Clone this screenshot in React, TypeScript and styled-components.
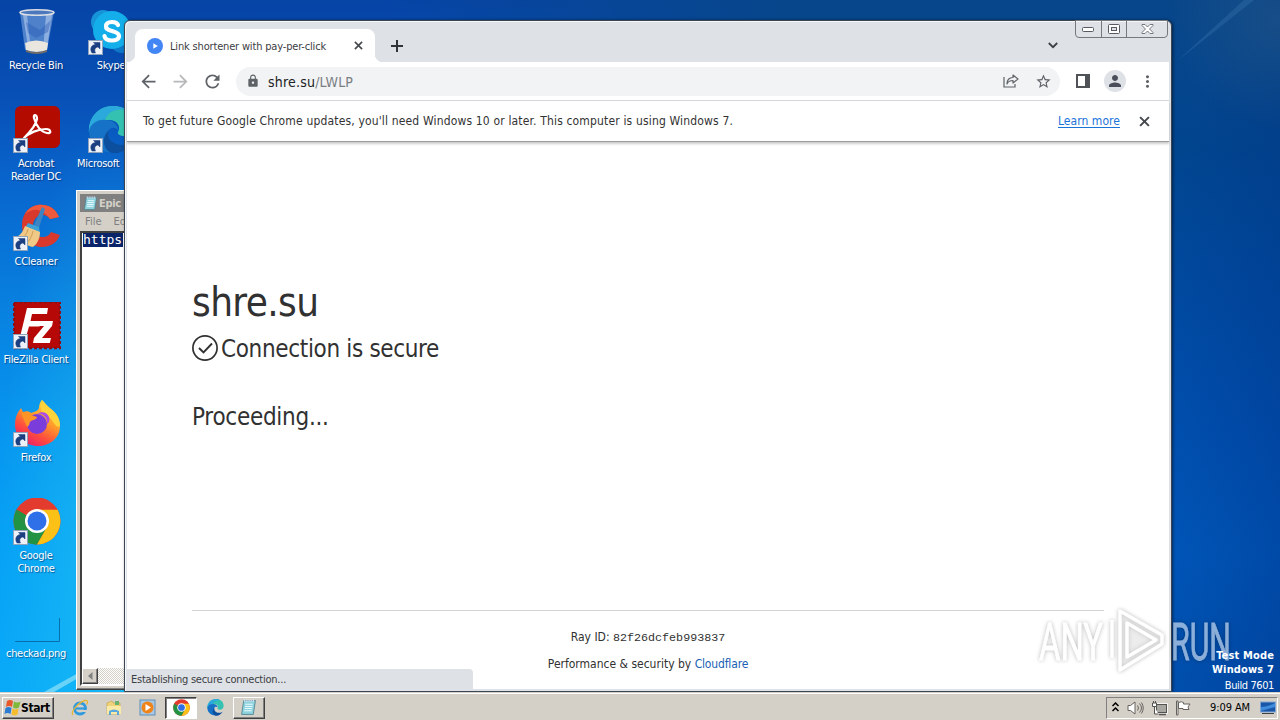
import React from 'react';
import styled, { createGlobalStyle, css } from 'styled-components';
import {
  MdArrowBack,
  MdArrowForward,
  MdLock,
  MdMoreVert,
  MdPerson,
  MdRefresh,
  MdStarBorder,
} from 'react-icons/md';

const fonts = {
  ui: '"DejaVu Sans Condensed", "DejaVu Sans", sans-serif',
  mono: '"DejaVu Sans Mono", monospace',
  courier: '"Liberation Mono", monospace',
};

const colors = {
  face: '#d4d0c8',
  frame: '#dee1e6',
  icon: '#5f6368',
  text: '#313131',
  link: '#1a5fb4',
};

const raised = css`
  border: 1px solid;
  border-color: #fff #404040 #404040 #fff;
  box-shadow: inset -1px -1px 0 #808080;
`;

const GlobalStyle = createGlobalStyle`
  * {
    box-sizing: border-box;
  }

  body {
    margin: 0;
    overflow: hidden;
    font-family: ${fonts.ui};
    font-size: 11px;
  }

  svg {
    display: block;
    flex-shrink: 0;
  }
`;

const Screen = styled.div`
  display: flex;
  flex-direction: column;
  width: 1280px;
  height: 720px;
  overflow: hidden;
`;

const Desktop = styled.main`
  position: relative;
  flex: 1;
  overflow: hidden;
  background: linear-gradient(90deg, transparent 30%, #07468a 62%),
    radial-gradient(
      ellipse 110px 420px at 110px 540px,
      rgba(50, 215, 240, 0.4),
      transparent
    ),
    linear-gradient(
      #0644a6 0%,
      #0850b6 14%,
      #0868d0 28%,
      #0880e0 44%,
      #0794ee 60%,
      #06a0f5 76%,
      #0aaaf8 100%
    );
`;

const RightGlow = styled.div`
  position: absolute;
  inset: 0 0 0 1160px;
  background: radial-gradient(
      circle at 120px 20px,
      rgba(40, 90, 135, 0.5),
      transparent 110px
    ),
    linear-gradient(100deg, transparent 20%, rgba(0, 40, 120, 0.4)),
    linear-gradient(
      #08468a 0%,
      #01458f 22%,
      #004a9f 40%,
      #0052b2 62%,
      #005cc0 80%,
      #0057b8 100%
    );
`;

const Beams = styled.svg`
  position: absolute;
  inset: 0;
`;

const IconGrid = styled.div`
  position: absolute;
  inset: 0 auto 0 0;
  display: grid;
  grid-template-columns: 72px 78px;
  grid-template-rows: repeat(7, 98px);
  grid-auto-flow: column;
`;

const Shortcut = styled.div`
  display: flex;
  flex-direction: column;
  align-items: center;
  padding-top: 8px;
`;

const ShortcutIcon = styled.div`
  margin-left: 2px;
  height: 48px;
`;

const ShortcutLabel = styled.span<{ $shift?: number }>`
  margin-top: 3px;
  margin-left: ${({ $shift = 0 }) => $shift}px;
  width: 84px;
  color: #fff;
  line-height: 13px;
  letter-spacing: -0.28px;
  text-align: center;
  white-space: pre-line;
  text-shadow: 1px 1px 1px rgba(0, 20, 70, 0.55);
`;

const Notepad = styled.section`
  position: absolute;
  left: 76px;
  top: 190px;
  display: flex;
  flex-direction: column;
  width: 420px;
  height: 500px;
  padding: 3px;
  background: ${colors.face};
  ${raised}
`;

const NotepadTitle = styled.header`
  display: flex;
  align-items: center;
  gap: 1px;
  height: 18px;
  padding-left: 3px;
  background: #808080;
  color: ${colors.face};
  font-weight: bold;
  letter-spacing: -0.3px;
`;

const NotepadMenu = styled.nav`
  display: flex;
  align-items: center;
  gap: 12px;
  height: 19px;
  padding-left: 5px;
  color: #808080;
`;

const NotepadBody = styled.div`
  flex: 1;
  display: flex;
  flex-direction: column;
  justify-content: space-between;
  align-items: stretch;
  border: 2px solid;
  border-color: #404040 #fff #fff #404040;
  background: #fff;
`;

const Selection = styled.span`
  align-self: flex-start;
  margin-left: 1px;
  padding-right: 1px;
  background: #0a246a;
  color: #fff;
  font: 13px/14px ${fonts.mono};
`;

const ScrollTrack = styled.div`
  display: flex;
  height: 16px;
  background: repeating-conic-gradient(#fff 0 25%, ${colors.face} 0 50%) 0 0 /
    2px 2px;
`;

const ScrollButton = styled.span`
  display: grid;
  place-items: center;
  width: 16px;
  height: 16px;
  background: ${colors.face};
  ${raised}
`;

const Browser = styled.section`
  position: absolute;
  left: 124px;
  top: 20px;
  display: flex;
  flex-direction: column;
  width: 1048px;
  height: 672px;
  padding: 0 2px 2px;
  border: 1px solid #3c4653;
  border-radius: 6px 6px 0 0;
  background: ${colors.frame};
  box-shadow: inset 1px 1px 0 #f6f7f9, 1px 0 3px rgba(0, 0, 0, 0.5);
`;

const TabStrip = styled.header`
  position: relative;
  display: flex;
  height: 41px;
  padding: 8px 0 0 8px;
`;

const Tab = styled.div`
  position: relative;
  display: flex;
  align-items: center;
  width: 240px;
  height: 33px;
  padding: 0 12px;
  border-radius: 8px 8px 0 0;
  background: #fff;
  color: #3c4043;

  &::before,
  &::after {
    content: '';
    position: absolute;
    bottom: 0;
    width: 8px;
    height: 8px;
    background: radial-gradient(circle at 0 0, transparent 8px, #fff 8.5px);
  }

  &::before {
    left: -8px;
  }

  &::after {
    right: -8px;
    transform: scaleX(-1);
  }
`;

const TabTitle = styled.span`
  flex: 1;
  margin-left: 7px;
  padding-top: 1px;
  letter-spacing: -0.17px;
  white-space: nowrap;
`;

const NewTab = styled.div`
  display: grid;
  place-items: center;
  width: 28px;
  margin-left: 8px;
  color: #303338;
`;

const TabSearch = styled.div`
  display: grid;
  place-items: center;
  width: 20px;
  margin-left: auto;
  margin-right: 106px;
  color: #3c4043;
`;

const WindowButtons = styled.div`
  position: absolute;
  top: -1px;
  right: 1px;
  display: grid;
  grid-template-columns: 25px 25px 41px;
  height: 18px;
  border: 1px solid #74787f;
  border-radius: 0 0 4px 4px;
`;

const WindowButton = styled.span`
  display: grid;
  place-items: center;
  border-left: 1px solid #74787f;

  &:first-child {
    border-left: none;
  }
`;

const Toolbar = styled.div`
  display: flex;
  align-items: center;
  height: 39px;
  padding: 0 11px;
  border-bottom: 1px solid #d4d6d9;
  background: #fff;
  color: ${colors.icon};
`;

const ToolButton = styled.span<{ $faded?: boolean }>`
  display: grid;
  place-items: center;
  width: 32px;
  opacity: ${({ $faded }) => ($faded ? 0.45 : 1)};
`;

const NavButtons = styled.div`
  display: flex;
  margin: 0 8px 0 -6px;
`;

const AddressBar = styled.div`
  display: flex;
  align-items: center;
  flex: 1;
  height: 29px;
  padding: 0 1px 0 10px;
  border-radius: 15px;
  background: #f1f3f4;
`;

const Url = styled.span`
  flex: 1;
  margin-left: 8px;
  padding-top: 1px;
  font-size: 14px;
  letter-spacing: 0.2px;
  color: #7a7e83;

  b {
    font-weight: normal;
    color: #202124;
  }
`;

const ToolbarActions = styled.div`
  display: flex;
  margin: 0 -5px 0 7px;
`;

const Avatar = styled.span`
  display: grid;
  place-items: center;
  width: 22px;
  height: 22px;
  border-radius: 50%;
  background: ${colors.frame};
  color: #4a4e5a;
`;

const InfoBar = styled.div`
  display: flex;
  align-items: center;
  height: 41px;
  padding: 0 19px 0 16px;
  border-bottom: 1px solid #9b9b9b;
  background: #fff;
  color: #333;
  font-size: 12px;
  letter-spacing: 0.16px;
  box-shadow: 0 2px 2px rgba(0, 0, 0, 0.2);
  z-index: 1;
`;

const LearnMore = styled.a`
  margin-left: auto;
  margin-right: 19px;
  color: #1a73d8;
  letter-spacing: 0.05px;
  text-decoration: underline;
  text-underline-offset: 2px;
`;

const Page = styled.article`
  position: relative;
  flex: 1;
  display: flex;
  flex-direction: column;
  padding: 130px 65px 15px;
  background: #fff;
  color: ${colors.text};
`;

const Heading = styled.h1`
  margin: 0;
  font-size: 40px;
  font-weight: normal;
  line-height: 60px;
  letter-spacing: -0.6px;
`;

const Status = styled.h2`
  display: flex;
  align-items: center;
  gap: 2px;
  height: 34px;
  margin: 0 0 34px;
  font-size: 24px;
  font-weight: normal;
  letter-spacing: -0.34px;
`;

const Progress = styled(Status)`
  margin: 0;
  letter-spacing: -0.28px;
`;

const Footer = styled.footer`
  display: flex;
  flex-direction: column;
  gap: 7px;
  margin-top: auto;
  padding-top: 16px;
  border-top: 1px solid #d4d4d4;
  font-size: 12px;
  line-height: 20px;
  text-align: center;

  code {
    font: 11.7px ${fonts.courier};
  }

  a {
    color: ${colors.link};
    letter-spacing: -0.15px;
  }
`;

const StatusBubble = styled.div`
  position: absolute;
  left: 0;
  bottom: 0;
  width: 346px;
  height: 20px;
  padding-left: 4px;
  border-radius: 0 4px 0 0;
  background: ${colors.frame};
  color: #3c4043;
  line-height: 21px;
  letter-spacing: -0.24px;
`;

const Watermark = styled.svg`
  position: absolute;
  left: 1030px;
  top: 600px;
  filter: drop-shadow(0 0 2px rgba(0, 0, 0, 0.5));
  opacity: 0.55;
`;

const BuildInfo = styled.div`
  position: absolute;
  right: 6px;
  bottom: 0;
  color: #fff;
  font-weight: bold;
  line-height: 14px;
  letter-spacing: 0.15px;
  text-align: right;

  small {
    display: block;
    margin-bottom: -2px;
    font-size: 11px;
    font-weight: normal;
    line-height: 17px;
    letter-spacing: -0.4px;
  }
`;

const Taskbar = styled.footer`
  display: flex;
  align-items: center;
  height: 28px;
  padding: 2px 2px 0;
  border-top: 1px solid ${colors.face};
  background: ${colors.face};
  box-shadow: inset 0 1px 0 #fff;
`;

const StartButton = styled.div`
  display: flex;
  align-items: center;
  width: 52px;
  height: 22px;
  margin-right: 9px;
  padding-left: 1px;
  background: ${colors.face};
  font-weight: bold;
  font-size: 12px;
  letter-spacing: -0.4px;
  ${raised}
`;

const QuickLaunch = styled.div`
  display: grid;
  grid-template-columns: repeat(6, 33.8px);
  height: 22px;
`;

const TaskItem = styled.span<{ $state?: 'open' | 'active' }>`
  display: grid;
  place-items: center;
  margin: 0 1px;
  ${({ $state }) => $state === 'open' && raised}
  ${({ $state }) =>
    $state === 'active' &&
    css`
      border: 1px solid;
      border-color: #404040 #fff #fff #404040;
      box-shadow: inset 1px 1px 0 #808080;
      background: #fff;
    `}
`;

const Tray = styled.div`
  display: flex;
  align-items: center;
  gap: 7px;
  width: 172px;
  height: 22px;
  margin-left: auto;
  padding: 0 1px 0 4px;
  border: 1px solid;
  border-color: #808080 #fff #fff #808080;
`;

const Clock = styled.time`
  margin-left: auto;
  margin-right: 3px;
  letter-spacing: -0.1px;
`;

const CloseIcon = ({ size = 10 }: { size?: number }) => (
  <svg width={size} height={size} viewBox="0 0 10 10">
    <path d="M1 1l8 8M9 1L1 9" fill="none" stroke="#45494d" strokeWidth="1.800" />
  </svg>
);

const Badge = () => (
  <g>
    <rect x=".5" y="32.5" width="14" height="14" fill="#eef2f8" stroke="#8fa3bd" />
    <path
      d="M4 45c-2.500-4-1-8 3.500-8.500L5.500 34.500H12V41l-2-2c-3 .5-4 2.500-2.500 6z"
      fill="#1b3f80"
      stroke="#1b3f80"
      strokeWidth=".5"
    />
  </g>
);

const RecycleBinIcon = () => (
  <svg width="48" height="48" viewBox="0 0 48 48">
    <path d="M7 4l5 38q12 5 22 0l7-38z" fill="#7fa8e0" fillOpacity=".6" />
    <path d="M10 7l5 32 3 3-4-35zM33 7l-3 35 4-2 5-33z" fill="#c9dcf5" fillOpacity=".5" />
    <path d="M13 14l14 8 11-10-3 12-12 6-8-5z" fill="#2757b4" fillOpacity=".4" />
    <path d="M12 35q11-5 23 0l-1 7q-10 4-21 0z" fill="#e9e6df" />
    <path d="M13 42q10 4 21 0v2q-10 4-21 0z" fill="#6f6c68" />
    <ellipse cx="24" cy="4.500" rx="17" ry="2.800" fill="#4c79be" stroke="#d9dde2" strokeWidth="1.600" />
  </svg>
);

const SkypeIcon = () => (
  <svg width="48" height="48" viewBox="0 0 48 48">
    <circle cx="15" cy="14" r="12" fill="#1794d8" />
    <circle cx="34" cy="33" r="12" fill="#0d78c8" />
    <circle cx="24" cy="22" r="19" fill="#14aeea" />
    <path
      d="M30 17c-1-3-4-3-6-3-3 0-6 1-6 4.500s3 3.500 6 4.500 7 1.500 7 5-4 4.500-7 4.500-7-1-7.500-4.500"
      fill="none"
      stroke="#fff"
      strokeWidth="4.200"
      strokeLinecap="round"
    />
    <Badge />
  </svg>
);

const AcrobatIcon = () => (
  <svg width="48" height="48" viewBox="0 0 48 48">
    <rect x="2" y="0" width="45" height="42" rx="6" fill="#b30b00" />
    <path
      d="M11 32c5-5 12-12 13-19 0-5-4-5-3-1 2 8 7 14 13 15 5 1 4-4-1-4-8 0-17 4-22 9z"
      fill="none"
      stroke="#fff"
      strokeWidth="2.200"
      strokeLinejoin="round"
    />
    <Badge />
  </svg>
);

const EdgeShape = () => (
  <>
    <path d="M1 27C0 10 12 0 25 0c14 0 22 9 22 19 0 7-5 11-11 11-4 0-7-2-6-4 3-5 0-12-9-12-11 0-18 6-20 13z" fill="#35c1b1" />
    <path d="M1 27C0 10 12 0 25 0c5 0 9 1 13 4-9-2-18 1-21 10C8 15 3 20 1 27z" fill="#2ba8dc" />
    <path d="M1 25C3 17 10 13 18 14c7 0 12 5 12 10-3-3-7-3-9 0-3 7 4 16 13 17-4 4-9 6-14 5C9 45 1 36 1 25z" fill="#1672c6" />
    <path d="M21 24c-3 8 3 15 14 15 4 0 7-2 9-3-4 7-11 12-19 11-9-1-13-15-4-23z" fill="#0d4f9f" />
  </>
);

const EdgeIcon = () => (
  <svg width="48" height="48" viewBox="0 0 48 48">
    <EdgeShape />
    <Badge />
  </svg>
);

const CCleanerIcon = () => (
  <svg width="48" height="48" viewBox="0 0 48 48">
    <path d="M46 13C42 3 33 0 25 1 15 2 9 11 9 21c0 12 8 22 20 22 8 0 15-4 18-12l-9-3c-2 4-5 5-9 5-6 0-9-5-9-11s4-11 9-11c4 0 6 1 8 4z" fill="#d9382c" />
    <path d="M46 13C42 3 33 0 25 1c-6 1-10 4-13 9 8-6 16-7 25 5z" fill="#ef5a3c" />
    <path d="M29 3l3 2-6 19-5-3z" fill="#3c85c2" />
    <path d="M15 19l11 4 1 6-15-5z" fill="#3fa2d6" />
    <path d="M12 22l15 6c0 7-3 12-7 15-6-1-14-6-17-10 5-2 7-6 9-11z" fill="#f0c987" />
    <path d="M15 25c-1 5-4 8-7 11M20 27c-1 6-4 10-7 13" stroke="#cf9d58" fill="none" />
    <Badge />
  </svg>
);

const FileZillaIcon = () => (
  <svg width="48" height="48" viewBox="0 0 48 48">
    <rect x="1" y="0" width="46" height="46" fill="#b70808" stroke="#8c0d12" strokeWidth="2.500" strokeDasharray="3 2" />
    <path d="M14 6h21l-1 6H19l-1.500 7H28l-1.500 5.500H16L13 35H7z" fill="#fff" />
    <path d="M26 19h14l-1 5-10 12h9l-1.200 5H20l1-5 10-12h-6z" fill="#fff" />
    <Badge />
  </svg>
);

const FirefoxIcon = () => (
  <svg width="48" height="48" viewBox="0 0 48 48">
    <defs>
      <linearGradient id="fox" x1=".8" y1="0" x2=".2" y2="1">
        <stop offset="0" stopColor="#ffe14a" />
        <stop offset=".4" stopColor="#ff9a2a" />
        <stop offset=".7" stopColor="#ff4a3f" />
        <stop offset="1" stopColor="#e5176f" />
      </linearGradient>
    </defs>
    <path d="M29 0c3 3 5 6 9 9 5 4 9 9 9 17 0 12-10 20-22 20S2 37 2 25C2 18 4 13 8 8l2 4c3-1 6-1 8 1 3-1 7-2 8-5 0-3 1-6 3-8z" fill="url(#fox)" />
    <circle cx="24" cy="24" r="10" fill="#7a3ddb" />
    <path d="M8 13c4-2 8-1 10 2l6 2c0 3-6 3-7 5s0 3-3 5z" fill="#ff9426" />
    <path d="M29 0c3 3 5 6 9 9 5 4 9 9 9 17-3 2-5-1-8-6-4-5-10-6-11-11-1-3-1-6 1-9z" fill="#ffd43b" />
    <path d="M24 14c6-1 11 4 10 10 2-1 3-4 2-7-2-5-7-6-12-3z" fill="#ab4ce8" />
    <Badge />
  </svg>
);

const ChromeShape = () => (
  <>
    <circle cx="24" cy="23" r="23.500" fill="#e33b2e" />
    <path d="M3.600 11.500A23.500 23.500 0 0 0 24 46.500l10.200-17.600L24 23z" fill="#229342" />
    <path d="M24 46.500A23.500 23.500 0 0 0 44.400 11.500H24V23l10 6z" fill="#fbc116" />
    <path d="M3.600 11.500L14 29l10-6V11.500z" fill="#e33b2e" />
    <path d="M3.600 11.500L14 29.300 24 23z" fill="#229342" />
    <path d="M5 10h38.500l1 1.500H24l-10 6-9.500-6z" fill="#e33b2e" />
    <circle cx="24" cy="23" r="12" fill="#fff" />
    <circle cx="24" cy="23" r="9.500" fill="#2f70e8" />
  </>
);

const ChromeIcon = () => (
  <svg width="48" height="48" viewBox="0 0 48 48">
    <ChromeShape />
    <Badge />
  </svg>
);

const ImageThumb = () => (
  <svg width="48" height="48" viewBox="0 0 48 48">
    <path d="M2 45.500H46.500V22" fill="none" stroke="#065f9c" strokeOpacity=".8" />
  </svg>
);

const NotepadIcon = ({ size = 16 }: { size?: number }) => (
  <svg width={size} height={size} viewBox="0 0 16 16">
    <path d="M3.500 1.500h11l-2 13h-11z" fill="#8fd3de" stroke="#4c7f8c" strokeWidth=".8" />
    <path d="M5 5h7M4.700 7h7M4.400 9h7M4 11h7" stroke="#e7fbff" />
    <path d="M4 1.500h10" stroke="#eef" strokeWidth="2" strokeDasharray="1 1" />
  </svg>
);

const StartLogo = () => (
  <svg width="17" height="17" viewBox="0 0 17 17">
    <path d="M3 2q3-2 6 0L8 8Q5 6 2 8z" fill="#e8582b" />
    <path d="M10 2.500q3 2 6.500 0L15 8.500q-3 2-6 0z" fill="#7fb93a" />
    <path d="M1.500 9q3-2 6 0l-1 6q-3-2-6 0z" fill="#2b7cd3" />
    <path d="M8.500 9.500q3 2 6 0l-1 6q-3 2-6 0z" fill="#f5bd2c" />
  </svg>
);

const ExplorerIcon = () => (
  <svg width="18" height="18" viewBox="0 0 18 18">
    <circle cx="9" cy="9.500" r="5.500" fill="none" stroke="#2f9ade" strokeWidth="2.800" />
    <path d="M4 9.500h10" stroke="#2f9ade" strokeWidth="2.200" />
    <path d="M11 11h5v2h-5z" fill={colors.face} />
    <path d="M2 16C-1 13 8 3 14 1.500c3-.5 3 2 1.500 4" fill="none" stroke="#e7b535" strokeWidth="1.300" />
  </svg>
);

const FolderIcon = () => (
  <svg width="18" height="18" viewBox="0 0 18 18">
    <path d="M2 4l5-2 1 2h7v11H2z" fill="#efd37a" stroke="#c79f3c" strokeWidth=".6" />
    <path d="M10 2h4v4h-4z" fill="#69b36f" />
    <path d="M2 7h14v8H2z" fill="#fbe9a6" />
    <path d="M4 16v-4q5-3 10 0v4h-2v-3H6v3z" fill="#5aa9dd" />
  </svg>
);

const MediaIcon = () => (
  <svg width="17" height="17" viewBox="0 0 17 17">
    <rect x="1" y="1" width="15" height="15" fill="#a9c8e2" stroke="#5f8fb8" />
    <circle cx="8.500" cy="8.500" r="6" fill="#f08318" />
    <path d="M6.500 5l5.500 3.500-5.500 3.500z" fill="#fff" />
  </svg>
);

const BrandMark = () => (
  <Watermark width="210" height="80" viewBox="0 0 210 80">
    <g
      fill="#fff"
      stroke="#fff"
      strokeWidth=".8"
      fontFamily="Roboto, sans-serif"
      fontSize="51"
    >
      <text x="9" y="60" textLength="64" lengthAdjust="spacingAndGlyphs">
        ANY
      </text>
      <text x="141" y="60" textLength="60" lengthAdjust="spacingAndGlyphs">
        RUN
      </text>
    </g>
    <g fill="none" stroke="#fff" strokeWidth="3.500" strokeLinejoin="round">
      <path d="M82 20v38" />
      <path d="M90 66V11l42 24v9L90 70z" fill="#d8d8d8" fillOpacity=".25" />
      <path d="M97 23l29 17-29 17z" />
    </g>
  </Watermark>
);

type DesktopItem = {
  label: string;
  Icon: () => React.JSX.Element;
  column: number;
  row: number;
  shift?: number;
};

const items: DesktopItem[] = [
  { label: 'Recycle Bin', Icon: RecycleBinIcon, column: 1, row: 1 },
  { label: 'Acrobat\nReader DC', Icon: AcrobatIcon, column: 1, row: 2 },
  { label: 'CCleaner', Icon: CCleanerIcon, column: 1, row: 3 },
  { label: 'FileZilla Client', Icon: FileZillaIcon, column: 1, row: 4 },
  { label: 'Firefox', Icon: FirefoxIcon, column: 1, row: 5 },
  { label: 'Google\nChrome', Icon: ChromeIcon, column: 1, row: 6 },
  { label: 'checkad.png', Icon: ImageThumb, column: 1, row: 7 },
  { label: 'Skype', Icon: SkypeIcon, column: 2, row: 1 },
  { label: 'Microsoft\u00a0 Edge', Icon: EdgeIcon, column: 2, row: 2, shift: 4 },
];

const NotepadWindow = () => (
  <Notepad>
    <NotepadTitle>
      <NotepadIcon size={15} />
      Epic
    </NotepadTitle>
    <NotepadMenu>
      <span>File</span>
      <span>Edit</span>
    </NotepadMenu>
    <NotepadBody>
      <Selection>https</Selection>
      <ScrollTrack>
        <ScrollButton>
          <svg width="5" height="8" viewBox="0 0 5 8">
            <path d="M4.500 0v8L0 4z" fill="#808080" />
          </svg>
        </ScrollButton>
      </ScrollTrack>
    </NotepadBody>
  </Notepad>
);

const BrowserTabs = () => (
  <TabStrip>
    <Tab>
      <svg width="16" height="16" viewBox="0 0 16 16">
        <circle cx="8" cy="8" r="8" fill="#4285f4" />
        <path d="M6.300 5.200v5.600L10.800 8z" fill="#fff" />
      </svg>
      <TabTitle>Link shortener with pay-per-click</TabTitle>
      <CloseIcon size={9} />
    </Tab>
    <NewTab>
      <svg width="12" height="12" viewBox="0 0 12 12">
        <path d="M6 0v12M0 6h12" stroke="currentColor" strokeWidth="2" />
      </svg>
    </NewTab>
    <TabSearch>
      <svg width="10" height="7" viewBox="0 0 10 7">
        <path d="M.8 1L5 5.200 9.200 1" fill="none" stroke="currentColor" strokeWidth="1.800" />
      </svg>
    </TabSearch>
    <WindowButtons>
      <WindowButton>
        <svg width="13" height="6" viewBox="0 0 13 6">
          <rect x=".5" y="1.500" width="11" height="4" rx="1" fill="#fff" stroke="#555a63" />
        </svg>
      </WindowButton>
      <WindowButton>
        <svg width="12" height="10" viewBox="0 0 12 10">
          <rect x=".5" y=".5" width="11" height="9" rx="1" fill="#fff" stroke="#555a63" />
          <rect x="3.500" y="3.500" width="5" height="3" fill="#dee1e6" stroke="#555a63" />
        </svg>
      </WindowButton>
      <WindowButton>
        <svg width="13" height="10" viewBox="0 0 13 10">
          <path
            d="M1 .5h3l2.500 2.500L9 .5h3v1L8.500 5 12 8.500v1H9L6.500 7 4 9.500H1v-1L4.500 5 1 1.500z"
            fill="#fff"
            stroke="#555a63"
            strokeWidth=".8"
          />
        </svg>
      </WindowButton>
    </WindowButtons>
  </TabStrip>
);

const BrowserToolbar = () => (
  <Toolbar>
    <NavButtons>
      <ToolButton>
        <MdArrowBack size={21} />
      </ToolButton>
      <ToolButton $faded>
        <MdArrowForward size={21} />
      </ToolButton>
      <ToolButton>
        <MdRefresh size={21} />
      </ToolButton>
    </NavButtons>
    <AddressBar>
      <MdLock size={14} />
      <Url>
        <b>shre.su</b>/LWLP
      </Url>
      <ToolButton>
        <svg width="16" height="14" viewBox="0 0 16 14" fill="none" stroke="currentColor" strokeWidth="1.200">
          <path d="M1 3v10h11v-3" />
          <path d="M10 1l5 4-5 4V6.500C7 6.500 5 7.500 4 10c0-4 2-6.500 6-6.500z" strokeLinejoin="round" />
        </svg>
      </ToolButton>
      <ToolButton>
        <MdStarBorder size={17} />
      </ToolButton>
    </AddressBar>
    <ToolbarActions>
      <ToolButton>
        <svg width="14" height="14" viewBox="0 0 14 14">
          <path d="M0 0h14v14H0zM2 2v10h7V2z" fill="#4f5358" fillRule="evenodd" />
        </svg>
      </ToolButton>
      <ToolButton>
        <Avatar>
          <MdPerson size={18} />
        </Avatar>
      </ToolButton>
      <ToolButton>
        <MdMoreVert size={19} />
      </ToolButton>
    </ToolbarActions>
  </Toolbar>
);

const BrowserWindow = () => (
  <Browser>
    <BrowserTabs />
    <BrowserToolbar />
    <InfoBar>
      <span>
        To get future Google Chrome updates, you'll need Windows 10 or later. This computer is
        using Windows 7.
      </span>
      <LearnMore>Learn more</LearnMore>
      <CloseIcon size={11} />
    </InfoBar>
    <Page>
      <Heading>shre.su</Heading>
      <Status>
        <svg width="27" height="28" viewBox="0 0 27 28" fill="none" stroke="#313131">
          <circle cx="13" cy="13" r="12.100" strokeWidth="1.700" />
          <path d="M7 13l4.500 4.500L20 8.500" strokeWidth="1.900" />
        </svg>
        Connection is secure
      </Status>
      <Progress>Proceeding...</Progress>
      <Footer>
        <div>
          Ray ID: <code>82f26dcfeb993837</code>
        </div>
        <div>
          Performance &amp; security by <a>Cloudflare</a>
        </div>
      </Footer>
      <StatusBubble>Establishing secure connection...</StatusBubble>
    </Page>
  </Browser>
);

const SystemTray = () => (
  <Tray>
    <svg width="9" height="12" viewBox="0 0 9 12" fill="none" stroke="#000" strokeWidth="1.500">
      <path d="M1.500 4l3-3 3 3M1.500 9l3-3 3 3" />
    </svg>
    <svg width="17" height="14" viewBox="0 0 17 14" fill="none" stroke="#66635f">
      <path d="M1 4.500h2.500L8 1v12L3.500 9.500H1z" fill="#fff" />
      <path d="M10.500 4.500q2 2.500 0 5M12.500 2.500q4 4.500 0 9M14.500 1.500q3.500 5.500 0 11" />
    </svg>
    <svg width="17" height="16" viewBox="0 0 17 16" fill="none" stroke="#55534f">
      <rect x="5.500" y="4.500" width="10" height="8" fill="#c7c5c0" stroke="#fff" strokeWidth="2.500" />
      <rect x="5.500" y="4.500" width="10" height="8" fill="#a9a7a2" />
      <path d="M8 14.500h7" strokeWidth="1.500" />
      <path d="M1.500 3v3.500h4V3zM2.500 1v2M4.500 1v2M3.500 7v7h4" fill="#fff" />
    </svg>
    <svg width="17" height="16" viewBox="0 0 17 16" fill="#fff" stroke="#66635f">
      <path d="M3.500 2.500q3-1.500 5 0v1.500h6.500l-2 3 1 2.500H8V8.500H3.500z" />
      <path d="M1.500 1v14h1.500V1z" />
    </svg>
    <Clock>9:09 AM</Clock>
    <svg width="16" height="14" viewBox="0 0 16 14">
      <rect x=".5" y="1" width="15" height="10" fill="#1a56a8" stroke="#7fa5d4" />
      <path d="M1 6q7 0 14-4v4l-14 4z" fill="#3f8bdc" />
      <path d="M2 12.500h12" stroke="#404040" />
    </svg>
  </Tray>
);

const App = (): React.JSX.Element => (
  <>
    <GlobalStyle />
    <Screen>
      <Desktop>
        <RightGlow />
        <Beams width="1280" height="692" viewBox="0 0 1280 692">
          <path d="M44 692l36-20v5l-26 15z" fill="#7fdcf8" fillOpacity=".8" />
          <path d="M1176 62l68-62h10z" fill="#5f9fd0" fillOpacity=".18" />
        </Beams>
        <IconGrid>
          {items.map(({ label, Icon, column, row, shift }) => (
            <Shortcut key={label} style={{ gridColumn: column, gridRow: row }}>
              <ShortcutIcon>
                <Icon />
              </ShortcutIcon>
              <ShortcutLabel $shift={shift}>{label}</ShortcutLabel>
            </Shortcut>
          ))}
        </IconGrid>
        <NotepadWindow />
        <BrowserWindow />
        <BrandMark />
        <BuildInfo>
          <div>Test Mode</div>
          <div>Windows 7</div>
          <small>Build 7601</small>
        </BuildInfo>
      </Desktop>
      <Taskbar>
        <StartButton>
          <StartLogo />
          Start
        </StartButton>
        <QuickLaunch>
          <TaskItem>
            <ExplorerIcon />
          </TaskItem>
          <TaskItem>
            <FolderIcon />
          </TaskItem>
          <TaskItem>
            <MediaIcon />
          </TaskItem>
          <TaskItem $state="active">
            <svg width="17" height="17" viewBox="0 -1 48 48">
              <ChromeShape />
            </svg>
          </TaskItem>
          <TaskItem>
            <svg width="17" height="17" viewBox="0 0 48 48">
              <EdgeShape />
            </svg>
          </TaskItem>
          <TaskItem $state="open">
            <NotepadIcon size={17} />
          </TaskItem>
        </QuickLaunch>
        <SystemTray />
      </Taskbar>
    </Screen>
  </>
);

export default App;
